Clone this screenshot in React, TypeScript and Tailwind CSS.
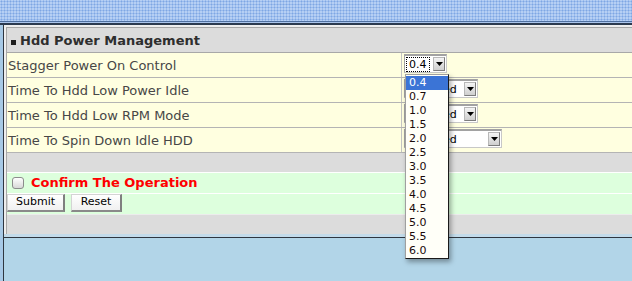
import React from "react";

const opts = ["0.4", "0.7", "1.0", "1.5", "2.0", "2.5", "3.0", "3.5", "4.0", "4.5", "5.0", "5.5", "6.0"];

function Arrow() {
  return (
    <div className="w-[12px] self-stretch flex items-center justify-center bg-gradient-to-b from-[#f4f4f4] to-[#cfcfcf] border border-[#b8b8b8] border-r-[#7d7d7d] border-b-[#7d7d7d]">
      <svg width="7" height="4" viewBox="0 0 7 4">
        <path d="M0 0 L7 0 L3.5 4 Z" fill="#000" />
      </svg>
    </div>
  );
}

function FakeSelect({ text, widthClass, focused }: { text: string; widthClass: string; focused?: boolean }) {
  return (
    <div
      className={`flex h-[19px] ${widthClass} bg-white border-t-[2px] border-l-[1px] border-r-[1px] border-b-[1px] border-t-[#a2a2a2] border-l-[#a2a2a2] border-r-[#c8c8c8] border-b-[#c8c8c8] pl-[1px] pr-[1px] pt-[1px] pb-[1px]`}
    >
      <div className="flex-1 flex items-center pl-[1px]">
        <span
          className={`leading-[13px] px-[2px] text-[11px] text-black ${focused ? "outline outline-1 outline-dotted outline-black" : ""}`}
        >
          {text}
        </span>
      </div>
      <Arrow />
    </div>
  );
}

function Row({ label, children }: { label: string; children: React.ReactNode }) {
  return (
    <div className="flex h-[25px] bg-[#ffffe0] border-b border-[#b4b4b4]">
      <div className="w-[394px] pl-[1px] pt-[2px] flex items-center text-[13px] text-[#474747]">
        {label}
      </div>
      <div className="w-px bg-[#c4c4c4]" />
      <div className="flex-1 pl-[2px] pt-[1px]">{children}</div>
    </div>
  );
}

function Btn({ label, widthClass }: { label: string; widthClass: string }) {
  return (
    <div
      className={`${widthClass} h-[18px] flex items-center justify-center text-[11px] text-black bg-gradient-to-b from-white to-[#f0f0f0] border-t border-l border-[#d4d4d4] border-r-[2px] border-b-[2px] border-r-[#7f7f7f] border-b-[#8a8a8a]`}
    >
      {label}
    </div>
  );
}

export default function App() {
  return (
    <div className="relative w-[632px] h-[281px] overflow-hidden flex flex-col bg-[#b2d5e8] font-['DejaVu_Sans',sans-serif]">
      <div className="h-[21px] shrink-0 bg-[#b6cff4] bg-[radial-gradient(#7ea6e4_0.9px,transparent_1.1px)] bg-[length:3px_3px]" />
      <div className="h-px shrink-0 bg-[#4f70a0]" />
      <div className="h-px shrink-0 bg-[#a9c4ec]" />
      <div className="h-[2px] shrink-0 bg-[#2b3a4f]" />
      <div className="flex flex-1">
        <div className="w-[3px] bg-[#a7c9e6]" />
        <div className="w-px bg-[#2f3640]" />
        <div className="flex-1 flex flex-col">
          <div className="bg-[#eeeeee] pt-[2px] pl-[2px]">
            <div className="border-t border-l border-[#a8a8a8]">
              <div className="h-[25px] bg-[#dcdcdc] border-b border-[#a8a8a8] flex items-center pl-[4px] pt-[1px]">
                <div className="w-[5px] h-[5px] bg-[#1e1e1e] mt-[3px]" />
                <span className="ml-[4px] text-[13px] font-bold text-[#2e2e2e]">Hdd Power Management</span>
              </div>
              <Row label="Stagger Power On Control">
                <FakeSelect text="0.4" widthClass="w-[43px]" focused />
              </Row>
              <Row label="Time To Hdd Low Power Idle">
                <FakeSelect text="Disabled" widthClass="w-[74px]" />
              </Row>
              <Row label="Time To Hdd Low RPM Mode">
                <FakeSelect text="Disabled" widthClass="w-[74px]" />
              </Row>
              <Row label="Time To Spin Down Idle HDD">
                <FakeSelect text="Disabled" widthClass="w-[98px]" />
              </Row>
              <div className="h-[20px] bg-[#dcdcdc] border-b border-white" />
              <div className="h-[21px] bg-[#ddffdd] border-b border-white flex items-center pl-[5px]">
                <div className="w-[12px] h-[12px] rounded-[3px] border border-[#8c8c8c] bg-gradient-to-b from-white to-[#d8d8d8]" />
                <span className="ml-[7px] text-[13px] font-bold text-[#ff0000]">Confirm The Operation</span>
              </div>
              <div className="h-[21px] bg-[#ddffdd] border-b border-[#ececec] flex items-start gap-[6px]">
                <Btn label="Submit" widthClass="w-[58px]" />
                <Btn label="Reset" widthClass="w-[51px]" />
              </div>
              <div className="h-[19px] bg-[#dcdcdc]" />
            </div>
          </div>
          <div className="h-[3px] bg-[#c3dbea]" />
          <div className="h-px bg-[#2f3640]" />
          <div className="flex-1" />
        </div>
      </div>

      <div className="absolute left-[405px] top-[74px] w-[44px] h-[185px] bg-[#fffff8] border border-[#a0a0a0] border-r-[#1a1a1a] border-b-[#1a1a1a] pt-px shadow-[2px_3px_5px_rgba(0,0,0,0.35)]">
        {opts.map((o, i) => (
          <div
            key={o}
            className={`h-[14px] leading-[14px] pl-[3px] text-[11px] ${i === 0 ? "bg-[#3b74d6] text-white" : "text-[#1a0a0a]"}`}
          >
            {o}
          </div>
        ))}
      </div>
    </div>
  );
}
